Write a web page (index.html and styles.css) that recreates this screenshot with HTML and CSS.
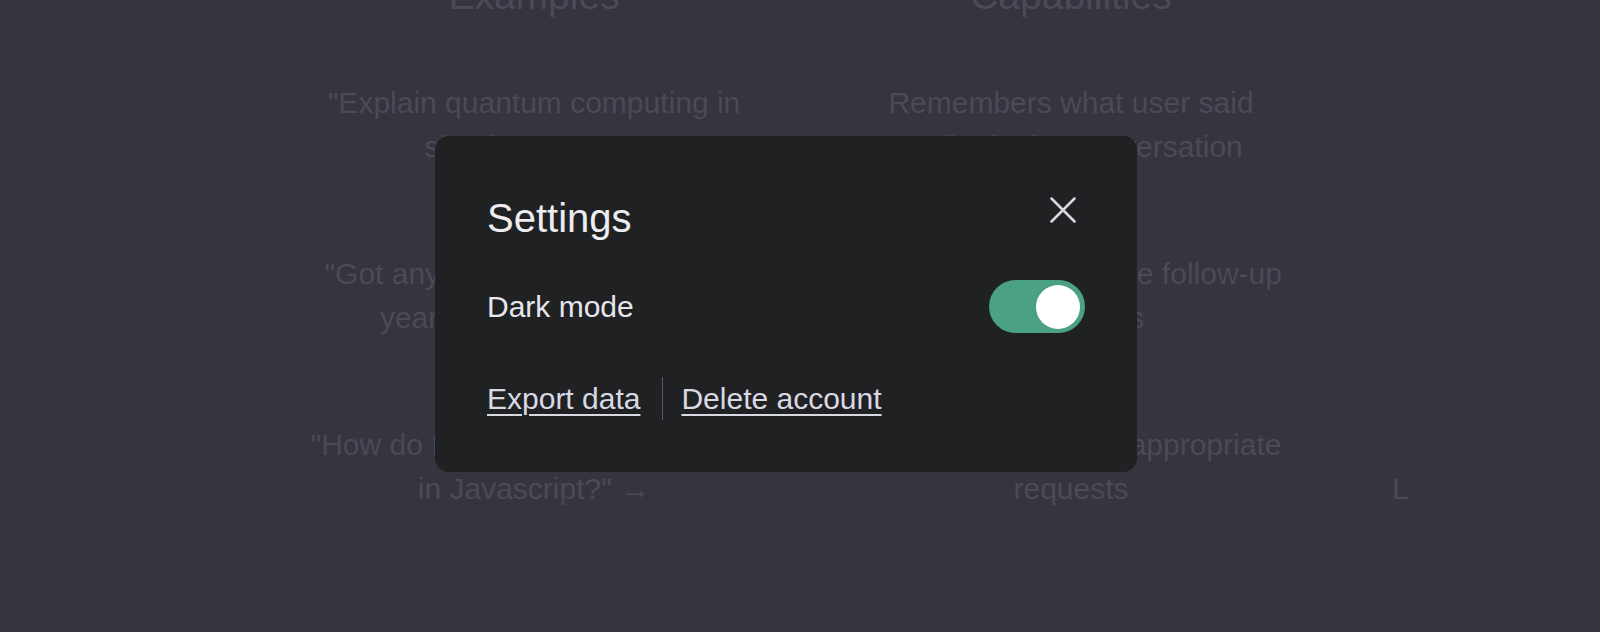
FILE: index.html
```html
<!DOCTYPE html>
<html lang="en">
<head>
<meta charset="utf-8">
<title>Settings</title>
<link rel="stylesheet" href="styles.css">
</head>
<body>
<main class="bg">
  <section class="col">
    <h2 class="col-title">Examples</h2>
    <div class="item">"Explain quantum computing in<br>simple terms" →</div>
    <div class="item">"Got any creative ideas for a 10<br>year old's birthday?" →</div>
    <div class="item">"How do I make an HTTP request<br>in Javascript?" →</div>
  </section>
  <section class="col">
    <h2 class="col-title">Capabilities</h2>
    <div class="item">Remembers what user said<br>earlier in the conversation</div>
    <div class="item">Allows user to provide follow-up<br>corrections</div>
    <div class="item">Trained to decline inappropriate<br>requests</div>
  </section>
  <section class="col col-third">
    <h2 class="col-title">&nbsp;</h2>
    <div class="item">&nbsp;<br>&nbsp;</div>
    <div class="item">&nbsp;<br>&nbsp;</div>
    <div class="item">&nbsp;<br>L</div>
  </section>
</main>

<div class="overlay">
  <div class="modal" role="dialog" aria-label="Settings">
    <div class="modal-header">
      <h1 class="modal-title">Settings</h1>
      <button class="close-btn" aria-label="Close">
        <svg width="26" height="26" viewBox="0 0 26 26" fill="none" stroke="currentColor" stroke-width="2.5" stroke-linecap="round">
          <path d="M1.5 1.5L24.5 24.5M24.5 1.5L1.5 24.5"/>
        </svg>
      </button>
    </div>
    <div class="setting-row">
      <span class="setting-label">Dark mode</span>
      <span class="toggle"><span class="knob"></span></span>
    </div>
    <div class="links">
      <a class="link" href="#">Export data</a>
      <span class="divider"></span>
      <a class="link" href="#">Delete account</a>
    </div>
  </div>
</div>
</body>
</html>
```

FILE: styles.css
```css
html, body {
  margin: 0;
  padding: 0;
  height: 100%;
}

body {
  background: #35343f;
  font-family: "Liberation Sans", Arial, sans-serif;
  overflow: hidden;
}

.bg {
  display: flex;
  gap: 41px;
  margin-left: 286px;
  margin-top: -32px;
  width: 1600px;
}

.col {
  flex: none;
  width: 496px;
  display: flex;
  flex-direction: column;
  gap: 31px;
  text-align: center;
  color: #4b4a56;
}

.col-title {
  margin: 0;
  font-size: 39px;
  line-height: 56px;
  font-weight: 400;
}

.item {
  padding: 26px 0;
  font-size: 30px;
  line-height: 44px;
  white-space: nowrap;
  border-radius: 13px;
  background: rgba(255, 255, 255, 0.005);
}

.col-third .item {
  text-align: left;
  padding-left: 32px;
}

.overlay {
  position: fixed;
  inset: 0;
  display: flex;
  align-items: flex-start;
  padding: 136px 0 0 435px;
}

.modal {
  width: 702px;
  box-sizing: border-box;
  padding: 52px;
  background: #202123;
  border-radius: 14px;
  display: flex;
  flex-direction: column;
}

.modal-header {
  display: flex;
  justify-content: space-between;
  align-items: flex-start;
}

.modal-title {
  margin: 2px 0 0 0;
  font-size: 40px;
  line-height: 56px;
  font-weight: 400;
  color: #ececf1;
}

.close-btn {
  width: 44px;
  height: 44px;
  padding: 0;
  border: 0;
  background: none;
  color: #d9d9e3;
  display: flex;
  align-items: center;
  justify-content: center;
}

.setting-row {
  margin-top: 34px;
  display: flex;
  align-items: center;
  justify-content: space-between;
}

.setting-label {
  font-size: 30px;
  line-height: 42px;
  color: #e6e6ec;
}

.toggle {
  width: 96px;
  height: 53px;
  box-sizing: border-box;
  border-radius: 27px;
  background: #4aa183;
  display: flex;
  align-items: center;
  justify-content: flex-end;
  padding-right: 5px;
}

.knob {
  width: 44px;
  height: 44px;
  border-radius: 50%;
  background: #ffffff;
}

.links {
  margin-top: 44px;
  display: flex;
  align-items: center;
  height: 43px;
}

.link {
  font-size: 30px;
  line-height: 43px;
  color: #d9d9e3;
  text-decoration: underline;
  text-decoration-thickness: 2px;
  text-underline-offset: 5px;
}

.divider {
  width: 1px;
  height: 43px;
  background: #565869;
  margin: 0 18px 0 22px;
}
```
